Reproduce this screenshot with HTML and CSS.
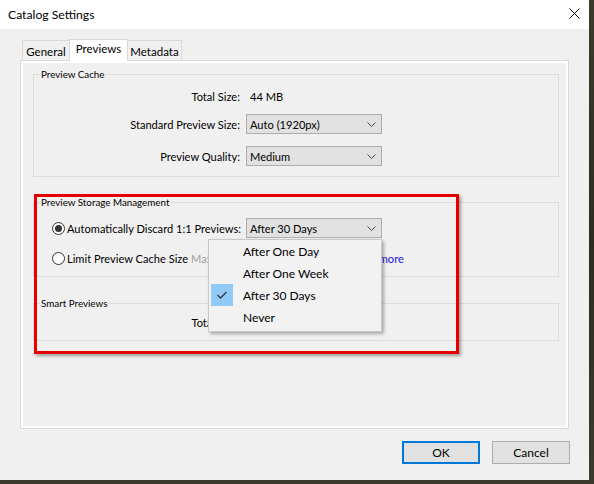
FILE: index.html
```html
<!DOCTYPE html>
<html>
<head>
<meta charset="utf-8">
<title>Catalog Settings</title>
<link rel="stylesheet" href="styles.css">
</head>
<body>
<div class="window">
  <div class="titlebar">
    <span class="title">Catalog Settings</span>
    <svg class="close" width="11" height="11" viewBox="0 0 11 11"><path d="M0.5 0.5 L10.5 10.5 M10.5 0.5 L0.5 10.5" stroke="#000" stroke-width="1" fill="none"/></svg>
  </div>

  <div class="tabs">
    <div class="tab tab-general">General</div>
    <div class="tab tab-previews active">Previews</div>
    <div class="tab tab-metadata">Metadata</div>
  </div>

  <div class="panel">
    <fieldset class="group cache">
      <legend>Preview Cache</legend>
      <div class="row">
        <span class="lbl">Total Size:</span>
        <span class="val">44 MB</span>
      </div>
      <div class="row r2">
        <span class="lbl">Standard Preview Size:</span>
        <div class="select"><span>Auto (1920px)</span><svg class="chev" width="9" height="5" viewBox="0 0 9 5"><path d="M0.5 0.5 L4.5 4.5 L8.5 0.5" stroke="#444" stroke-width="1" fill="none"/></svg></div>
      </div>
      <div class="row r3">
        <span class="lbl">Preview Quality:</span>
        <div class="select"><span>Medium</span><svg class="chev" width="9" height="5" viewBox="0 0 9 5"><path d="M0.5 0.5 L4.5 4.5 L8.5 0.5" stroke="#444" stroke-width="1" fill="none"/></svg></div>
      </div>
    </fieldset>

    <fieldset class="group storage">
      <legend>Preview Storage Management</legend>
      <div class="radio-row first">
        <label class="opt"><span class="radio on"></span><span>Automatically Discard 1:1 Previews:</span></label>
        <div class="select"><span>After 30 Days</span><svg class="chev" width="9" height="5" viewBox="0 0 9 5"><path d="M0.5 0.5 L4.5 4.5 L8.5 0.5" stroke="#444" stroke-width="1" fill="none"/></svg></div>
      </div>
      <div class="radio-row second">
        <label class="opt"><span class="radio"></span><span>Limit Preview Cache Size</span></label>
        <span class="muted">Max</span>
        <a class="link">Learn more</a>
      </div>
    </fieldset>

    <fieldset class="group smart">
      <legend>Smart Previews</legend>
      <div class="row">
        <span class="lbl">Total Size:</span>
        <span class="val"></span>
      </div>
    </fieldset>
  </div>

  <div class="footer">
    <button class="btn primary">OK</button>
    <button class="btn">Cancel</button>
  </div>

  <div class="highlight"></div>

  <div class="menu">
    <div class="item"><span class="mark"></span><span>After One Day</span></div>
    <div class="item"><span class="mark"></span><span>After One Week</span></div>
    <div class="item"><span class="mark checked"><svg width="22" height="22" viewBox="0 0 22 22"><path d="M6.5 11 L9.5 14 L15.5 8" stroke="#2b3a48" stroke-width="1.3" fill="none"/></svg></span><span>After 30 Days</span></div>
    <div class="item"><span class="mark"></span><span>Never</span></div>
  </div>
</div>
</body>
</html>
```
FILE: styles.css
```css
* { box-sizing: border-box; }

html, body {
  margin: 0;
  padding: 0;
}

body {
  width: 594px;
  height: 484px;
  overflow: hidden;
  background: linear-gradient(180deg, #3b3a2c 0%, #2c2c22 50%, #3a3a2e 100%);
  font-family: Lato, "Noto Sans", sans-serif;
  font-size: 11.1px;
  color: #000;
}

.window {
  position: relative;
  width: 589px;
  height: 480px;
  background: #f0f0f0;
}

.titlebar {
  height: 29px;
  background: #fff;
  display: flex;
  align-items: center;
  justify-content: space-between;
  padding: 0 9px 0 8px;
}

.title {
  font-size: 12.2px;
  padding-bottom: 1px;
}

.close { display: block; margin-bottom: 2px; }

.tabs {
  display: flex;
  align-items: flex-end;
  height: 21px;
  margin: 10px 0 0 22px;
  position: relative;
  z-index: 1;
  font-size: 11.5px;
}

.tab {
  height: 20px;
  border: 1px solid #d9d9d9;
  border-bottom: none;
  background: #f0f0f0;
  display: flex;
  align-items: center;
  justify-content: center;
  margin-right: -1px;
  padding-top: 1px;
}

.tab-general { width: 48px; }
.tab-previews { width: 59px; }
.tab-metadata { width: 55px; }

.tab.active {
  height: 22px;
  background: #fff;
  margin-bottom: -1px;
  position: relative;
  z-index: 2;
  padding-top: 0;
  padding-bottom: 4px;
}

.panel {
  margin-left: 20px;
  width: 549px;
  height: 369px;
  border: 1px solid #d9d9d9;
  box-shadow: inset 0 0 0 2px #fff;
  padding: 7px 9px 0 12px;
}

fieldset.group {
  margin: 0;
  padding: 0;
  border: 1px solid #dcdcdc;
  min-width: 0;
  width: 526px;
}

legend {
  font-size: 9.8px;
  line-height: 12px;
  padding: 0 1px;
  margin-left: 6px;
}

fieldset.cache { padding: 6px 0 10px; }
fieldset.storage { margin-top: 19px; padding: 10px 0 8px; }
fieldset.smart { margin-top: 20px; padding: 3px 0 8px; }

.row {
  display: grid;
  grid-template-columns: 206px 136px;
  column-gap: 6px;
  align-items: center;
  height: 20px;
  white-space: nowrap;
}

.r2 { margin-top: 8px; }
.r3 { margin-top: 12px; }

.lbl { text-align: right; }
.val { padding-left: 4px; }

.select {
  height: 20px;
  border: 1px solid #adadad;
  background: #e1e1e1;
  display: flex;
  align-items: center;
  justify-content: space-between;
  padding: 0 5px 0 3px;
}

.chev { display: block; }

.radio-row {
  display: grid;
  align-items: center;
  height: 20px;
  white-space: nowrap;
}

.radio-row.first { grid-template-columns: 212px 136px; }
.radio-row.second { grid-template-columns: 157px 158px auto; margin-top: 10px; }

.opt {
  display: flex;
  align-items: center;
  gap: 2px;
  padding-left: 18px;
}

.radio {
  width: 13px;
  height: 13px;
  border: 1px solid #333;
  border-radius: 50%;
  background: #fff;
  display: flex;
  align-items: center;
  justify-content: center;
  flex: none;
}

.radio.on::after {
  content: "";
  width: 7px;
  height: 7px;
  border-radius: 50%;
  background: #333;
}

.muted { color: #a0a0a0; overflow: hidden; }

.link { color: #1414e0; }

.footer {
  display: flex;
  justify-content: flex-end;
  gap: 12px;
  padding-right: 19px;
  margin-top: 12px;
}

.btn {
  width: 78px;
  height: 23px;
  border: 1px solid #adadad;
  background: #e1e1e1;
  font: inherit;
  font-size: 12px;
  color: #000;
  padding: 0;
}

.btn.primary { border: 2px solid #0078d7; }

.highlight {
  position: absolute;
  left: 34px;
  top: 194px;
  width: 425px;
  height: 160px;
  border: 3px solid #e60000;
  box-shadow: 2px 2px 3px rgba(0, 0, 0, 0.35);
  pointer-events: none;
  z-index: 5;
}

.menu {
  position: absolute;
  left: 208px;
  top: 239px;
  width: 174px;
  height: 93px;
  background: #f2f2f2;
  border: 1px solid #c8c8c8;
  box-shadow: 2px 2px 3px rgba(0, 0, 0, 0.3);
  padding: 0 0 3px;
  z-index: 6;
  font-size: 12px;
}

.item {
  height: 22px;
  display: flex;
  align-items: center;
  padding-left: 2px;
}

.mark {
  width: 22px;
  height: 22px;
  margin-right: 10px;
  flex: none;
}

.mark.checked { background: #91c9f7; }
.mark svg { display: block; }
```
